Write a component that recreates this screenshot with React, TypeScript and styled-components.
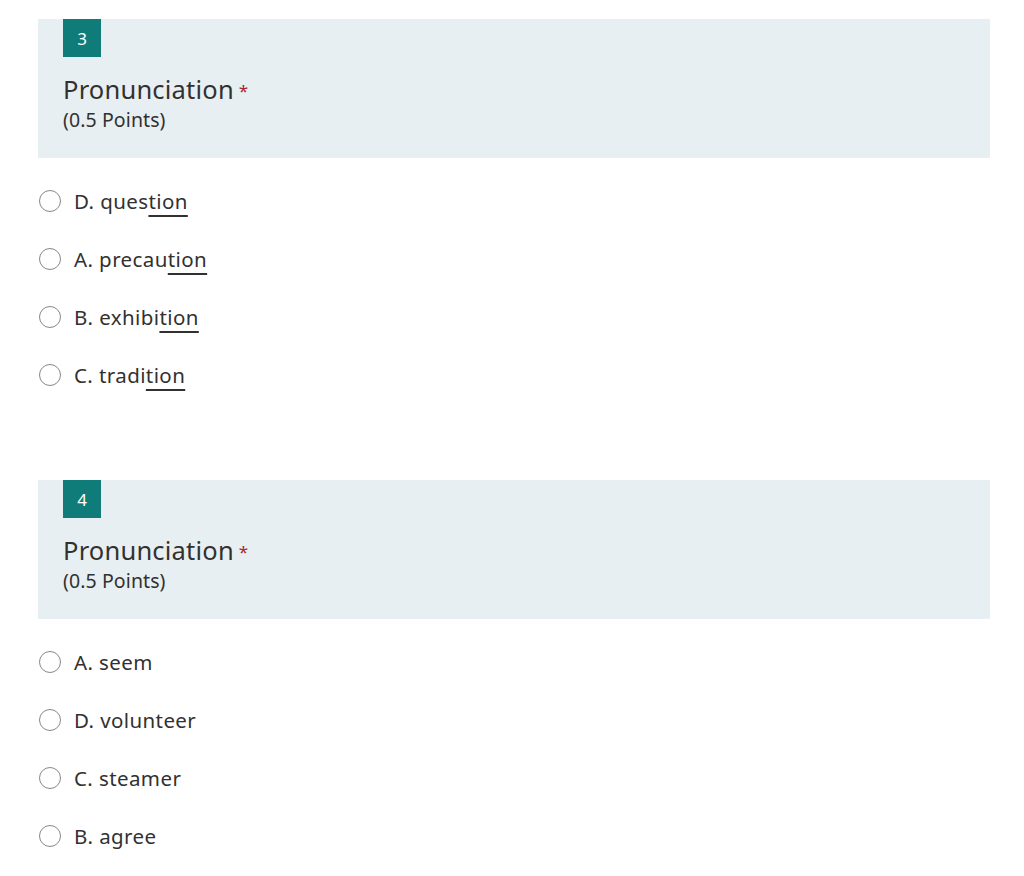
import styled, { createGlobalStyle } from 'styled-components'

const GlobalStyle = createGlobalStyle`
  body {
    margin: 0;
    background: #fff;
    font-family: 'Noto Sans', 'Open Sans', sans-serif;
    color: #323130;
  }
`

const Page = styled.div`
  padding: 19px 34px 0 38px;
`

const Question = styled.section`
  & + & {
    margin-top: 76px;
  }
`

const Header = styled.div`
  height: 139px;
  box-sizing: border-box;
  padding: 0 25px;
  background-color: #e8eff2;
`

const Badge = styled.div`
  width: 38px;
  height: 38px;
  display: flex;
  align-items: center;
  justify-content: center;
  background-color: #107c7a;
  color: #fff;
  font-size: 17px;
`

const Title = styled.div`
  margin-top: 15px;
  font-size: 25.5px;
  letter-spacing: 0.2px;
  line-height: 34px;
`

const Star = styled.span`
  color: #a4262c;
  font-size: 17px;
  margin-left: 5px;
  vertical-align: 2px;
`

const Points = styled.div`
  font-size: 19.5px;
  letter-spacing: 0.1px;
  line-height: 24px;
`

const Options = styled.div`
  margin-top: 14px;
`

const Option = styled.label`
  height: 58px;
  display: flex;
  align-items: center;
  gap: 13px;
  font-size: 20.5px;
  letter-spacing: 0.4px;
`

const Radio = styled.span`
  width: 22px;
  height: 22px;
  box-sizing: border-box;
  margin-left: 1px;
  border: 1px solid #8a8886;
  border-radius: 50%;
  background: #fff;
`

const Under = styled.span`
  text-decoration: underline;
  text-underline-offset: 6px;
  text-decoration-thickness: 2px;
`

type Choice = { text: string; mark?: string }

const questions: { n: number; choices: Choice[] }[] = [
  {
    n: 3,
    choices: [
      { text: 'D. ques', mark: 'tion' },
      { text: 'A. precau', mark: 'tion' },
      { text: 'B. exhibi', mark: 'tion' },
      { text: 'C. tradi', mark: 'tion' },
    ],
  },
  {
    n: 4,
    choices: [
      { text: 'A. seem' },
      { text: 'D. volunteer' },
      { text: 'C. steamer' },
      { text: 'B. agree' },
    ],
  },
]

export default function App() {
  return (
    <>
      <GlobalStyle />
      <Page>
        {questions.map((q) => (
          <Question key={q.n}>
            <Header>
              <Badge>{q.n}</Badge>
              <Title>
                Pronunciation<Star>*</Star>
              </Title>
              <Points>(0.5 Points)</Points>
            </Header>
            <Options>
              {q.choices.map((c) => (
                <Option key={c.text}>
                  <Radio />
                  <span>
                    {c.text}
                    {c.mark && <Under>{c.mark}</Under>}
                  </span>
                </Option>
              ))}
            </Options>
          </Question>
        ))}
      </Page>
    </>
  )
}
